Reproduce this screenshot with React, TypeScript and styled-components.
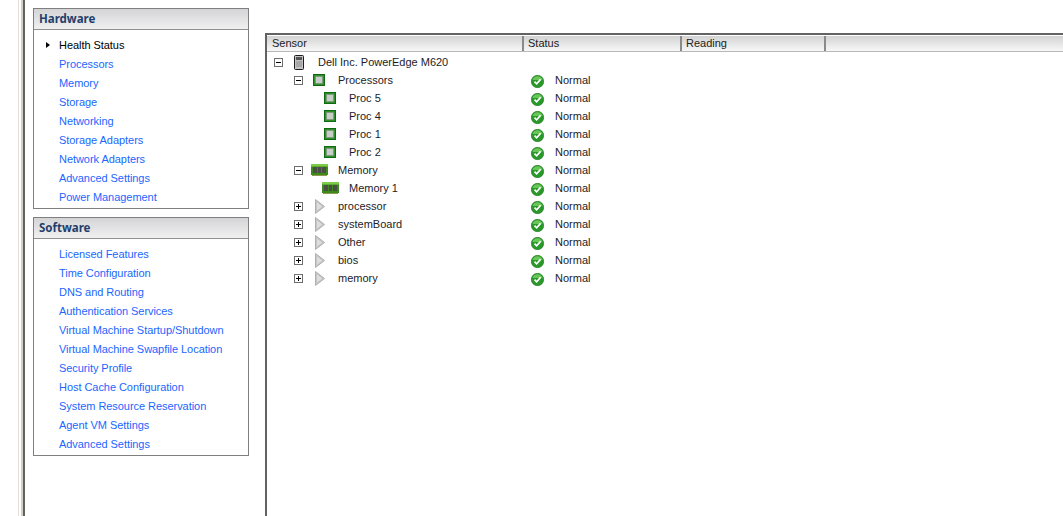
import React from "react";
import styled, { createGlobalStyle } from "styled-components";

const GlobalStyle = createGlobalStyle`
  html, body {
    margin: 0;
    padding: 0;
    height: 516px;
    overflow: hidden;
    background: #fff;
    font-family: "Liberation Sans", Arial, sans-serif;
    font-size: 11px;
  }
`;

const Page = styled.div`
  display: flex;
  height: 516px;
  width: 1063px;
`;

const Rail = styled.div`
  width: 2px;
  margin-left: 18px;
  border-left: 1px solid #e4e1dc;
  border-right: 2px solid #d4d0c8;
  box-shadow: 2px 0 0 #626262;
  flex: none;
  box-sizing: content-box;
`;

const Sidebar = styled.div`
  width: 216px;
  margin-left: 10px;
  padding-top: 8px;
  display: flex;
  flex-direction: column;
  gap: 8px;
  flex: none;
`;

const Panel = styled.section`
  border: 1px solid #7f7f7f;
`;

const PanelTitle = styled.h2`
  margin: 0;
  height: 20px;
  line-height: 19px;
  padding-left: 5px;
  font-family: "Noto Sans", sans-serif;
  font-size: 11.5px;
  font-weight: 700;
  color: #1f3f6b;
  background: linear-gradient(#d4d4d6, #f0f0f1);
  border-bottom: 1px solid #8f8f8f;
`;

const NavList = styled.ul`
  list-style: none;
  margin: 0;
  padding: 6px 0 1px 25px;
`;

const NavItem = styled.li<{ $active?: boolean }>`
  position: relative;
  height: 19px;
  line-height: 19px;
  letter-spacing: -0.05px;
  color: ${(p) => (p.$active ? "#000" : "#1a66ff")};
  &::before {
    content: "";
    display: ${(p) => (p.$active ? "block" : "none")};
    position: absolute;
    left: -13px;
    top: 6px;
    border-left: 4px solid #000;
    border-top: 3px solid transparent;
    border-bottom: 3px solid transparent;
  }
`;

const Main = styled.main`
  flex: 1;
  margin-left: 16px;
  margin-top: 33px;
  border-top: 2px solid #626262;
  border-left: 2px solid #626262;
`;

const HeaderRow = styled.div`
  display: grid;
  grid-template-columns: 257px 158px 144px 1fr;
  height: 15px;
  margin-top: 1px;
  border-bottom: 1px solid #b8b8b8;
  background: linear-gradient(#d2d2d2, #f8f8f8);
`;

const HeaderCell = styled.div`
  line-height: 15px;
  padding-left: 4px;
  color: #222;
  border-right: 2px solid #8a8a8a;
  &:first-child {
    padding-left: 5px;
  }
  &:last-child {
    border-right: none;
  }
`;

const Tree = styled.div`
  padding-top: 1px;
`;

const Row = styled.div`
  display: grid;
  grid-template-columns: 256px 1fr;
  height: 18px;
  color: #1c1c28;
`;

const SensorCell = styled.div<{ $indent: number }>`
  display: flex;
  align-items: center;
  padding-left: ${(p) => p.$indent}px;
`;

const ToggleBox = styled.span`
  position: relative;
  flex: none;
  width: 7px;
  height: 7px;
  margin-right: 7px;
  border: 1px solid #6e6e6e;
  background: #fff;
  &::before {
    content: "";
    position: absolute;
    left: 1px;
    top: 3px;
    width: 5px;
    height: 1px;
    background: #000;
  }
`;

const PlusBox = styled(ToggleBox)`
  &::after {
    content: "";
    position: absolute;
    left: 3px;
    top: 1px;
    width: 1px;
    height: 5px;
    background: #000;
  }
`;

const IconSlot = styled.span`
  flex: none;
  width: 18px;
  margin-right: 10px;
  display: flex;
  justify-content: center;
  align-items: center;
`;

const StatusCell = styled.div`
  display: flex;
  align-items: center;
  padding-left: 8px;
  gap: 11px;
  line-height: 18px;
  svg {
    margin-top: 2px;
  }
`;

const ServerIcon = () => (
  <svg width="10" height="15" viewBox="0 0 10 15">
    <rect x="0.5" y="0.5" width="9" height="14" rx="1" fill="#c4c4c4" stroke="#1c1c1c" />
    <rect x="2" y="2" width="6" height="3" fill="#555" />
    <path d="M2 7h6M2 9h6M2 11h6" stroke="#8a8a8a" />
  </svg>
);

const CpuIcon = () => (
  <svg width="12" height="12" viewBox="0 0 12 12">
    <rect x="0" y="0" width="12" height="12" fill="#0f6b12" />
    <rect x="1" y="1" width="10" height="10" fill="#2f8f2a" />
    <rect x="2.5" y="2.5" width="7" height="7" fill="#c9cdc9" stroke="#7f8a7f" strokeWidth="0.5" />
  </svg>
);

const RamIcon = () => (
  <svg width="17" height="12" viewBox="0 0 17 12">
    <rect x="0" y="0" width="17" height="11" fill="#3c8a1c" />
    <rect x="0" y="0" width="17" height="2.5" fill="#7ccc4a" />
    <rect x="2" y="3" width="4" height="6" fill="#4a4f45" />
    <rect x="7" y="3" width="3" height="6" fill="#4a4f45" />
    <rect x="11" y="3" width="4" height="6" fill="#4a4f45" />
    <rect x="1" y="11" width="15" height="1" fill="#8f9a50" />
  </svg>
);

const GroupIcon = () => (
  <svg width="12" height="15" viewBox="0 0 12 15">
    <path d="M2.5 0.5L11.5 7.5L2.5 14.5Z" fill="#c6c6c6" stroke="#b0b0b0" />
    <path d="M4 3.5L9 7.5L4 11.5Z" fill="#dedede" />
  </svg>
);

const CheckIcon = () => (
  <svg width="13" height="13" viewBox="0 0 13 13">
    <circle cx="6.5" cy="6.5" r="6.2" fill="#2a982a" stroke="#187418" strokeWidth="0.6" />
    <path d="M1.5 5A5.2 5.2 0 0 1 11.5 5Z" fill="#69c75a" />
    <path d="M3.5 6.7L5.6 8.8L9.6 4.4" fill="none" stroke="#fff" strokeWidth="1.7" />
  </svg>
);

const icons = {
  server: <ServerIcon />,
  cpu: <CpuIcon />,
  ram: <RamIcon />,
  group: <GroupIcon />,
};

type IconName = keyof typeof icons;

interface SensorRow {
  label: string;
  indent: number;
  icon: IconName;
  toggle?: "open" | "closed";
  noStatus?: boolean;
}

const hardware = [
  "Health Status",
  "Processors",
  "Memory",
  "Storage",
  "Networking",
  "Storage Adapters",
  "Network Adapters",
  "Advanced Settings",
  "Power Management",
];

const software = [
  "Licensed Features",
  "Time Configuration",
  "DNS and Routing",
  "Authentication Services",
  "Virtual Machine Startup/Shutdown",
  "Virtual Machine Swapfile Location",
  "Security Profile",
  "Host Cache Configuration",
  "System Resource Reservation",
  "Agent VM Settings",
  "Advanced Settings",
];

const rows: SensorRow[] = [
  { label: "Dell Inc. PowerEdge M620", indent: 7, icon: "server", toggle: "open", noStatus: true },
  { label: "Processors", indent: 27, icon: "cpu", toggle: "open" },
  { label: "Proc 5", indent: 54, icon: "cpu" },
  { label: "Proc 4", indent: 54, icon: "cpu" },
  { label: "Proc 1", indent: 54, icon: "cpu" },
  { label: "Proc 2", indent: 54, icon: "cpu" },
  { label: "Memory", indent: 27, icon: "ram", toggle: "open" },
  { label: "Memory 1", indent: 54, icon: "ram" },
  { label: "processor", indent: 27, icon: "group", toggle: "closed" },
  { label: "systemBoard", indent: 27, icon: "group", toggle: "closed" },
  { label: "Other", indent: 27, icon: "group", toggle: "closed" },
  { label: "bios", indent: 27, icon: "group", toggle: "closed" },
  { label: "memory", indent: 27, icon: "group", toggle: "closed" },
];

function App() {
  return (
    <Page>
      <GlobalStyle />
      <Rail />
      <Sidebar>
        <Panel>
          <PanelTitle>Hardware</PanelTitle>
          <NavList>
            {hardware.map((item, i) => (
              <NavItem key={item} $active={i === 0}>
                {item}
              </NavItem>
            ))}
          </NavList>
        </Panel>
        <Panel>
          <PanelTitle>Software</PanelTitle>
          <NavList>
            {software.map((item) => (
              <NavItem key={item}>{item}</NavItem>
            ))}
          </NavList>
        </Panel>
      </Sidebar>
      <Main>
        <HeaderRow>
          <HeaderCell>Sensor</HeaderCell>
          <HeaderCell>Status</HeaderCell>
          <HeaderCell>Reading</HeaderCell>
          <HeaderCell />
        </HeaderRow>
        <Tree>
          {rows.map((row) => (
            <Row key={row.label}>
              <SensorCell $indent={row.indent}>
                {row.toggle === "open" && <ToggleBox />}
                {row.toggle === "closed" && <PlusBox />}
                <IconSlot>{icons[row.icon]}</IconSlot>
                {row.label}
              </SensorCell>
              {!row.noStatus && (
                <StatusCell>
                  <CheckIcon />
                  Normal
                </StatusCell>
              )}
            </Row>
          ))}
        </Tree>
      </Main>
    </Page>
  );
}

export default App;
